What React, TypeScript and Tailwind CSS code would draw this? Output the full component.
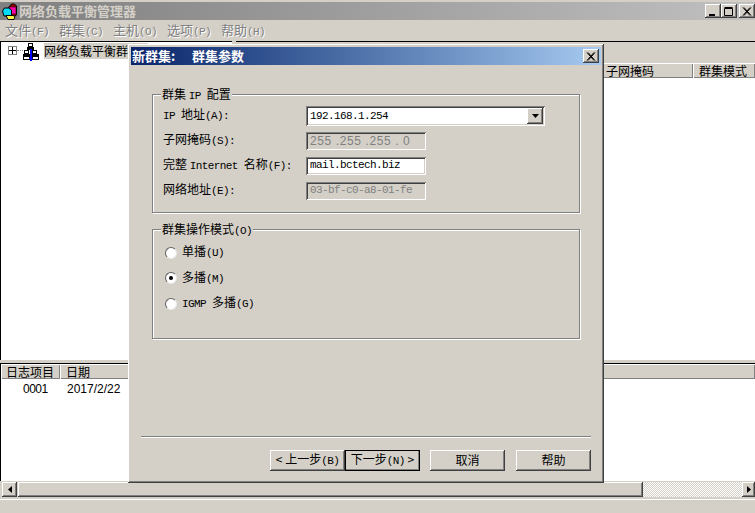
import React from "react";

const cjk = "[font-family:'Noto_Sans_CJK_SC','Liberation_Mono',monospace]";
const raised = "shadow-[inset_-1px_-1px_0_#404040,inset_1px_1px_0_#fff,inset_-2px_-2px_0_#808080]";
const sunken = "shadow-[inset_1px_1px_0_#808080,inset_-1px_-1px_0_#fff,inset_2px_2px_0_#404040,inset_-2px_-2px_0_#d4d0c8]";

function L({ children }: { children: React.ReactNode }) {
  return <span className="font-['Liberation_Mono'] text-[11px] tracking-[-0.6px]">{children}</span>;
}

function Disabled({ children }: { children: React.ReactNode }) {
  return <span className="text-[#808080] [text-shadow:1px_1px_0_#fff]">{children}</span>;
}

function AppIcon() {
  return (
    <svg width="16" height="17" viewBox="0 0 16 17" className="shrink-0">
      <path d="M6.5 4.5l3-3.5h3l2 2v9l-2 1h-6z" fill="#900" stroke="#000" />
      <rect x="7" y="4" width="7" height="7" fill="#f0a" stroke="#000" strokeWidth="0.5" />
      <path d="M0.5 8l2-3h4l3 2v5l-2 1H2z" fill="#0df" stroke="#000" />
      <path d="M4 12.5h7l2 1-1 3H6z" fill="#ff4" stroke="#000" />
    </svg>
  );
}

function ClusterIcon() {
  return (
    <svg width="16" height="18" viewBox="0 0 16 18" className="shrink-0" shapeRendering="crispEdges">
      <rect x="5.5" y="0.5" width="4" height="3" fill="#fff" stroke="#000" />
      <rect x="4" y="4" width="7" height="3" fill="#000" />
      <rect x="1.5" y="7.5" width="4" height="3" fill="#fff" stroke="#000" />
      <rect x="9.5" y="7.5" width="4" height="3" fill="#fff" stroke="#000" />
      <rect x="0" y="11" width="7" height="2" fill="#000" />
      <rect x="9" y="11" width="7" height="2" fill="#000" />
      <rect x="0.5" y="13.5" width="6" height="3" fill="#fff" stroke="#000" />
      <rect x="9.5" y="13.5" width="6" height="3" fill="#fff" stroke="#000" />
      <rect x="7" y="6" width="2" height="12" fill="#00f" />
      <rect x="6" y="15" width="4" height="1" fill="#00f" />
    </svg>
  );
}

function WinBtn({ kind, className = "" }: { kind: "min" | "max" | "close"; className?: string }) {
  return (
    <div className={`w-[16px] h-[14px] bg-[#d4d0c8] flex items-center justify-center ${raised} ${className}`}>
      <svg width="10" height="9" viewBox="0 0 10 9">
        {kind === "min" && <rect x="1" y="7" width="6" height="2" fill="#000" />}
        {kind === "max" && <path d="M0.5 1.5h8v7h-8z M0.5 0.5h8" fill="none" stroke="#000" />}
        {kind === "close" && <path d="M1 0.5l7 8M2 0.5l7 8M8 0.5l-7 8M9 0.5l-7 8" stroke="#000" fill="none" />}
      </svg>
    </div>
  );
}

function Head({ className, children }: { className: string; children: React.ReactNode }) {
  return (
    <div className={`h-[15px] bg-[#d4d0c8] text-[12px] leading-[15px] text-black shadow-[inset_1px_1px_0_#fff,inset_-1px_-1px_0_#808080] overflow-hidden whitespace-nowrap ${className}`}>
      {children}
    </div>
  );
}

function Field({ label, children }: { label: React.ReactNode; children: React.ReactNode }) {
  return (
    <div className="h-[25px] flex items-center">
      <div className="w-[153px] pl-[10px] pb-[2px] text-[12px] text-black whitespace-nowrap">{label}</div>
      {children}
    </div>
  );
}

function Input({ value, disabled }: { value: React.ReactNode; disabled?: boolean }) {
  return (
    <div className={`w-[120px] h-[18px] flex items-center pl-[4px] whitespace-nowrap ${sunken} ${disabled ? "bg-[#d4d0c8] text-[#808080]" : "bg-white text-black"}`}>
      {value}
    </div>
  );
}

function Radio({ checked, children }: { checked?: boolean; children: React.ReactNode }) {
  return (
    <div className="h-[25.5px] flex items-center pl-[12px] text-[12px] text-black whitespace-nowrap">
      <div className="w-[12px] h-[12px] rounded-full bg-white border border-[#606060] border-r-[#e8e8e8] border-b-[#e8e8e8] flex items-center justify-center mr-[5px]">
        {checked && <div className="w-[4px] h-[4px] rounded-full bg-black" />}
      </div>
      <span className="pb-[2px]">{children}</span>
    </div>
  );
}

function Btn({ children, className = "" }: { children: React.ReactNode; className?: string }) {
  return (
    <div className={`h-[21px] bg-[#d4d0c8] flex items-center justify-center text-[12px] text-black whitespace-nowrap ${raised} ${className}`}>
      <span className="pb-[1px]">{children}</span>
    </div>
  );
}

function Dialog() {
  return (
    <div className={`absolute left-[128px] top-[44px] w-[476px] h-[439px] bg-[#d4d0c8] p-[3px] flex flex-col ${raised}`}>
      <div className="h-[18px] shrink-0 flex items-center justify-between pl-[1px] pr-[2px] bg-gradient-to-r from-[#0a246a] to-[#a6caf0] text-white font-bold text-[13px]">
        <span className="flex whitespace-nowrap">
          <span className="w-[60px]">新群集:</span>
          <span>群集参数</span>
        </span>
        <WinBtn kind="close" />
      </div>

      <div className="mt-[29px] ml-[21px] mr-[21px] h-[119px] border border-[#808080] shadow-[1px_1px_0_#fff,inset_1px_1px_0_#fff]">
        <div className="-mt-[9px] ml-[8px] w-fit px-[1px] h-[17px] bg-[#d4d0c8] text-[12px] leading-[16px] text-black whitespace-nowrap">
          群集 <L>IP </L>配置
        </div>
        <Field label={<><L>IP </L>地址<L>(A):</L></>}>
          <div className={`w-[239px] h-[20px] mt-[1px] bg-white flex items-center justify-between pl-[4px] pr-[2px] text-black ${sunken}`}>
            <L>192.168.1.254</L>
            <div className={`w-[16px] h-[16px] bg-[#d4d0c8] flex items-center justify-center ${raised}`}>
              <svg width="7" height="4" viewBox="0 0 7 4"><path d="M0 0h7L3.5 4z" fill="#000" /></svg>
            </div>
          </div>
        </Field>
        <Field label={<>子网掩码<L>(S):</L></>}>
          <Input disabled value={<span className="font-['Liberation_Sans'] text-[12px] tracking-[0.6px]">255 .255 .255 . 0</span>} />
        </Field>
        <Field label={<>完整 <L>Internet </L>名称<L>(F):</L></>}>
          <Input value={<L>mail.bctech.biz</L>} />
        </Field>
        <Field label={<>网络地址<L>(E):</L></>}>
          <Input disabled value={<L>03-bf-c0-a8-01-fe</L>} />
        </Field>
      </div>

      <div className="mt-[16px] ml-[21px] mr-[21px] h-[110px] border border-[#808080] shadow-[1px_1px_0_#fff,inset_1px_1px_0_#fff]">
        <div className="-mt-[9px] ml-[8px] w-fit px-[1px] h-[17px] bg-[#d4d0c8] text-[12px] leading-[16px] text-black whitespace-nowrap">
          群集操作模式<L>(O)</L>
        </div>
        <div className="mt-[2px]">
          <Radio>单播<L>(U)</L></Radio>
          <Radio checked>多播<L>(M)</L></Radio>
          <Radio><L>IGMP </L>多播<L>(G)</L></Radio>
        </div>
      </div>

      <div className="mt-auto mx-[10px] h-[2px] bg-[#808080] border-b border-white" />
      <div className="mt-[12px] mb-[9px] mr-[10px] flex justify-end">
        <Btn className="w-[75px]">&lt; 上一步<L>(B)</L></Btn>
        <Btn className="w-[75px] outline outline-1 -outline-offset-1 outline-black">下一步<L>(N)</L> &gt;</Btn>
        <Btn className="w-[75px] ml-[10px]">取消</Btn>
        <Btn className="w-[75px] ml-[11px]">帮助</Btn>
      </div>
    </div>
  );
}

export default function App() {
  return (
    <div className={`relative w-[755px] h-[513px] overflow-hidden bg-[#d4d0c8] flex flex-col ${cjk}`}>
      {/* title bar */}
      <div className="mt-[2px] h-[18px] shrink-0 flex items-center pl-[2px] bg-gradient-to-r from-[#808080] to-[#c0c0c0]">
        <AppIcon />
        <span className="ml-[1px] text-[13px] font-bold text-[#d4d0c8] whitespace-nowrap">网络负载平衡管理器</span>
        <div className="ml-auto flex items-center">
          <WinBtn kind="min" />
          <WinBtn kind="max" />
          <WinBtn kind="close" className="ml-[2px]" />
        </div>
      </div>

      {/* menu */}
      <div className="h-[21px] shrink-0 flex items-center text-[13px] whitespace-nowrap">
        {[["文件", "(F)"], ["群集", "(C)"], ["主机", "(O)"], ["选项", "(P)"], ["帮助", "(H)"]].map(([a, b]) => (
          <div key={a} className="w-[54px] pl-[5px]">
            <Disabled>{a}<L>{b}</L></Disabled>
          </div>
        ))}
      </div>

      {/* upper panes */}
      <div className="h-[319px] shrink-0 flex">
        <div className="w-[232px] bg-white border-t border-t-black border-l border-l-black pt-[1px] flex items-start">
          <div className="ml-[7px] mt-[3px] w-[9px] h-[9px] border border-[#808080] bg-white flex items-center justify-center shrink-0">
            <svg width="7" height="7" viewBox="0 0 7 7"><path d="M0 3.5h7M3.5 0v7" stroke="#000" /></svg>
          </div>
          <div className="mt-[7px] w-[6px] border-t border-dotted border-[#808080] shrink-0" />
          <ClusterIcon />
          <div className="ml-[5px] h-[16px] bg-[#d4d0c8] text-[12px] leading-[16px] text-black whitespace-nowrap pr-[20px]">
            网络负载平衡群
          </div>
        </div>
        <div className="ml-[4px] flex-1 flex flex-col border-t border-t-black">
          <div className="h-[21px] shrink-0" />
          <div className="flex shrink-0 pl-[367px]">
            <Head className="w-[90px] pl-[3px]">子网掩码</Head>
            <Head className="flex-1 pl-[6px]">群集模式</Head>
          </div>
          <div className="flex-1 bg-white" />
        </div>
      </div>

      {/* bottom list */}
      <div className="mt-[3px] h-[118px] shrink-0 flex flex-col bg-white border-t border-t-black border-l border-l-black">
        <div className="flex shrink-0">
          <Head className="w-[59px] pl-[5px]">日志项目</Head>
          <Head className="flex-1 pl-[6px]">日期</Head>
        </div>
        <div className="flex mt-[3px] font-['Liberation_Sans'] text-[12px] leading-[14px] text-black">
          <div className="w-[66px] pl-[22px] tracking-[-0.5px]">0001</div>
          <div>2017/2/22</div>
        </div>
      </div>

      {/* scrollbar */}
      <div className="mt-[1px] h-[15px] shrink-0 flex pl-[2px]">
        <div className={`w-[15px] bg-[#d4d0c8] flex items-center justify-center ${raised}`}>
          <svg width="4" height="7" viewBox="0 0 4 7"><path d="M4 0v7L0 3.5z" fill="#000" /></svg>
        </div>
        <div className={`ml-[1px] w-[625px] bg-[#d4d0c8] ${raised}`} />
        <div className="flex-1 bg-[repeating-conic-gradient(#fff_0_25%,#d4d0c8_0_50%)] bg-[length:2px_2px]" />
        <div className={`w-[13px] bg-[#d4d0c8] flex items-center justify-center ${raised}`}>
          <svg width="4" height="7" viewBox="0 0 4 7"><path d="M0 0v7l4-3.5z" fill="#000" /></svg>
        </div>
      </div>

      {/* status bar */}
      <div className="mt-[2px] flex-1 border-t border-t-white" />

      <Dialog />
    </div>
  );
}
